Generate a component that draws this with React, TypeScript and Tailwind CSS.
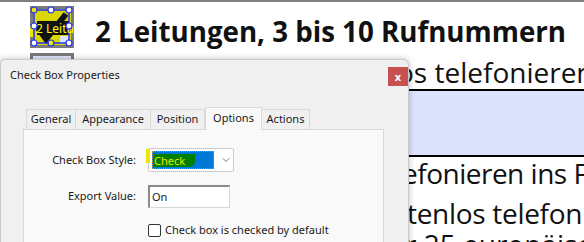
import { ChevronDown } from 'lucide-react';

const tabs = [
  { label: 'General', w: 'w-[50px]' },
  { label: 'Appearance', w: 'w-[75px]' },
  { label: 'Position', w: 'w-[54px]' },
  { label: 'Options', w: 'w-[57px]', active: true },
  { label: 'Actions', w: 'w-[48px]' },
];

function FieldIcon() {
  return (
    <svg width="48" height="44" viewBox="0 0 48 44" className="block">
      <rect x="0" y="0" width="44" height="42" fill="#7a7a7a" />
      <rect x="3" y="3" width="38" height="36" fill="#d8d800" />
      <path d="M8 22 L16 33 L36 8" stroke="#111" strokeWidth="6" fill="none" />
      <rect x="7" y="15" width="32" height="14" fill="#111" />
      <rect x="30" y="30" width="10" height="8" fill="#dfe6fb" />
      <rect x="0" y="20" width="4" height="11" fill="#e8e800" />
      <rect x="4" y="4" width="35" height="33" fill="none" stroke="#1f2fff" strokeWidth="1.5" />
      <text x="6" y="27" fontSize="12" fill="#ffff00" fontFamily="Noto Sans, sans-serif">2 Leitu</text>
      {[
        [4, 4, '#e8e800'], [21, 4, '#fff'], [39, 4, '#fff'],
        [4, 20, '#fff'], [39, 20, '#fff'],
        [4, 37, '#fff'], [21, 37, '#e8e800'], [39, 37, '#fff'],
      ].map(([cx, cy, f], i) => (
        <circle key={i} cx={cx as number} cy={cy as number} r="3" fill={f as string} stroke="#1f2fff" strokeWidth="1.2" />
      ))}
    </svg>
  );
}

function Dialog() {
  return (
    <div className="absolute left-0 top-[59px] w-[409px] h-[190px] bg-[#f0f0f0] border border-[#c9c9c9] rounded-tr-[6px] rounded-tl-[4px] shadow-[0_0_6px_rgba(0,0,0,0.25)] font-['Noto_Sans',sans-serif] text-[11px] text-[#1a1a1a]">
      <div className="flex items-start justify-between h-[47px] pl-[9px]">
        <span className="mt-[7px]">Check Box Properties</span>
        <button className="mt-[7px] w-[20px] h-[19px] bg-[#c75050] text-white text-[11px] font-bold leading-[18px] flex items-center justify-center">x</button>
      </div>
      <div className="flex items-end pl-[25px] h-[22px]">
        {tabs.map((t) => (
          <div
            key={t.label}
            className={
              t.active
                ? `${t.w} h-[23px] -mb-px bg-[#f9f9f9] border border-b-0 border-[#d9d9d9] flex items-start justify-center pt-[2px] z-10`
                : `${t.w} h-[20px] bg-[#f0f0f0] border border-b-0 border-l-0 first:border-l border-[#d9d9d9] flex items-center justify-center`
            }
          >
            {t.label}
          </div>
        ))}
      </div>
      <div className="ml-[22px] w-[361px] h-[130px] bg-[#f9f9f9] border border-[#d9d9d9] pt-[18px]">
        <div className="flex items-center h-[24px]">
          <span className="w-[124px] text-right pr-[12px]">Check Box Style:</span>
          <div className="relative w-[86px] h-[24px] bg-white border border-[#cccccc] rounded-[2px] flex items-center pl-[3px]">
            <span className="absolute left-[-3px] top-0 w-[4px] h-[14px] bg-[#e8e800]" />
            <div className="w-[62px] h-[18px] bg-[#0078d7] border border-dotted border-[#d88c2a] flex items-center">
              <span className="bg-[#008000] text-[#e8e800] pl-[1px] pr-[10px] leading-[13px] rounded-br-[6px]">Check</span>
            </div>
            <ChevronDown className="ml-[6px] w-[12px] h-[12px] text-[#555]" strokeWidth={1.5} />
          </div>
        </div>
        <div className="flex items-center h-[24px] mt-[12px]">
          <span className="w-[124px] text-right pr-[12px]">Export Value:</span>
          <div className="w-[82px] h-[23px] bg-white border border-[#d7d7d7] border-t-[#8a8a8a] border-l-[#8a8a8a] border-t-2 border-l-2 pl-[2px] leading-[19px]">On</div>
        </div>
        <div className="flex items-center mt-[14px] pl-[124px]">
          <span className="w-[13px] h-[13px] border border-[#333] rounded-[2px] bg-white mr-[4px]" />
          <span>Check box is checked by default</span>
        </div>
      </div>
    </div>
  );
}

export default function App() {
  return (
    <div className="relative w-[584px] h-[242px] overflow-hidden bg-white font-['Open_Sans',sans-serif] text-[#111]">
      <div className="h-[2px] bg-[#808080]" />
      <div className="flex items-start">
        <div className="pl-[30px] pt-[4px] flex flex-col gap-[3px]">
          <FieldIcon />
          <div className="w-[44px] h-[14px] bg-[#7a7a7a] p-[3px]">
            <div className="h-full bg-[#dfe6fb]" />
          </div>
        </div>
        <h1 className="ml-[17px] mt-[11px] text-[27.7px] font-bold leading-[36px] whitespace-nowrap">
          2 Leitungen, 3 bis 10 Rufnummern
        </h1>
      </div>
      <div className="absolute left-0 right-0 top-[56px] whitespace-nowrap text-[28px] leading-[32px]">
        <div className="pl-[397px]">os telefonieren</div>
        <div className="mt-px h-[68px] bg-[#dce3fc] border-y-2 border-black" />
        <div className="pl-[402px] tracking-[-0.5px]">efonieren ins Festnetz</div>
        <div className="pl-[407px] mt-[8px] tracking-[-0.3px]">tenlos telefonieren</div>
        <div className="pl-[405px] -mt-[1px]">r 25 europäische</div>
      </div>
      <Dialog />
    </div>
  );
}
